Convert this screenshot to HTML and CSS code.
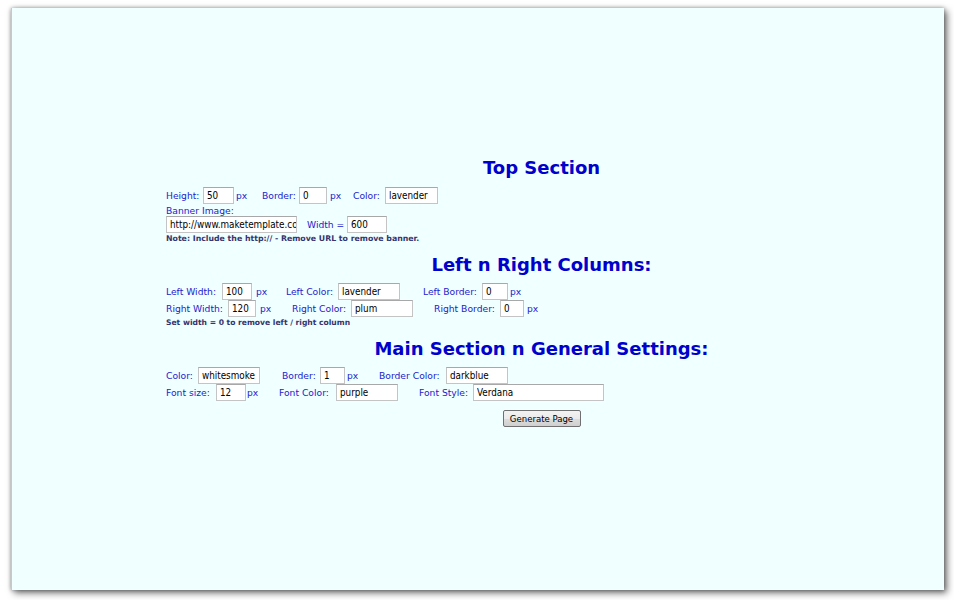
FILE: index.html
```html
<!DOCTYPE html>
<html>
<head>
<meta charset="utf-8">
<title>Make Template</title>
<link rel="stylesheet" href="styles.css">
</head>
<body>
<div class="window">
  <form class="form">
    <h2 class="sec-title first">Top Section</h2>
    <div class="row">
      <span class="lbl w37">Height:</span><input class="in w31" value="50"><span class="unit w28 p2">px</span>
      <span class="lbl w37">Border:</span><input class="in w28" value="0"><span class="unit w26 p3">px</span>
      <span class="lbl w32">Color:</span><input class="in w53" value="lavender">
    </div>
    <div class="line">Banner Image:</div>
    <div class="row">
      <input class="in w131" value="http://www.maketemplate.com/banner.gif"><span class="lbl w50 p10">Width =</span><input class="in w40" value="600">
    </div>
    <div class="note n1">Note: Include the http:// - Remove URL to remove banner.</div>

    <h2 class="sec-title">Left n Right Columns:</h2>
    <div class="row">
      <span class="lbl w56">Left Width:</span><input class="in w30" value="100"><span class="unit w34 p4">px</span>
      <span class="lbl w52">Left Color:</span><input class="in w62" value="lavender">
      <span class="lbl w59 ml23">Left Border:</span><input class="in w26" value="0"><span class="unit p2">px</span>
    </div>
    <div class="row">
      <span class="lbl w62">Right Width:</span><input class="in w28" value="120"><span class="unit w36 p4">px</span>
      <span class="lbl w59">Right Color:</span><input class="in w62" value="plum">
      <span class="lbl w66 ml21">Right Border:</span><input class="in w24" value="0"><span class="unit p3">px</span>
    </div>
    <div class="note n2">Set width = 0 to remove left / right column</div>

    <h2 class="sec-title">Main Section n General Settings:</h2>
    <div class="row">
      <span class="lbl w32">Color:</span><input class="in w62" value="whitesmoke">
      <span class="lbl w38 ml22">Border:</span><input class="in w25" value="1"><span class="unit w34 p2">px</span>
      <span class="lbl w67">Border Color:</span><input class="in w62" value="darkblue">
    </div>
    <div class="row">
      <span class="lbl w50">Font size:</span><input class="in w30" value="12"><span class="unit w33 p1">px</span>
      <span class="lbl w57">Font Color:</span><input class="in w62" value="purple">
      <span class="lbl w54 ml21">Font Style:</span><input class="in w131" value="Verdana">
    </div>
    <div class="btn-row">
      <button type="button" class="btn">Generate Page</button>
    </div>
  </form>
</div>
</body>
</html>
```
FILE: styles.css
```css
html, body {
  margin: 0;
  padding: 0;
  background: #ffffff;
}
body {
  width: 954px;
  height: 600px;
  overflow: hidden;
}
.window {
  margin: 8px 0 0 11px;
  width: 933px;
  height: 582px;
  background: #f0ffff;
  box-shadow: 0 0 4px rgba(0,0,0,0.35), 3px 3px 7px rgba(0,0,0,0.55);
  border-left: 1px solid #c8c8c8;
  box-sizing: border-box;
  overflow: hidden;
}
.form {
  margin: 0 0 0 154px;
  padding-top: 149px;
  width: 751px;
  font-family: "DejaVu Sans", Verdana, sans-serif;
  font-size: 9.2px;
  color: #2222cc;
}
.sec-title {
  margin: 10px 0 0 0;
  font-size: 18px;
  line-height: 22px;
  font-weight: bold;
  color: #0000cc;
  text-align: center;
}
.sec-title.first {
  margin-top: 0;
}
.sec-title + .row {
  margin-top: 7px;
}
.form > .sec-title.first + .row {
  margin-top: 8px;
}
.row {
  display: flex;
  align-items: center;
  height: 17px;
}
.line {
  height: 12px;
  line-height: 13px;
}
.note {
  margin-top: 1px;
  line-height: 10px;
  font-weight: bold;
  color: #34346e;
}
.note.n1 {
  font-size: 7.8px;
}
.note.n2 {
  font-size: 7.6px;
}
.lbl, .unit {
  display: inline-block;
  white-space: nowrap;
  box-sizing: border-box;
  line-height: 17px;
}
.in {
  box-sizing: border-box;
  height: 17px;
  margin: 0;
  padding: 0 0 0 3px;
  border: 1px solid #c4c4c4;
  border-top-color: #a8a8a8;
  background: #ffffff;
  font-family: "DejaVu Sans Condensed", "DejaVu Sans", sans-serif;
  font-stretch: condensed;
  font-size: 9.8px;
  color: #000000;
  outline: none;
}
.btn-row {
  margin-top: 9px;
  display: flex;
  justify-content: center;
}
.btn {
  box-sizing: border-box;
  width: 78px;
  height: 17px;
  padding: 0;
  margin: 0;
  border: 1px solid #707070;
  border-radius: 2px;
  background: linear-gradient(#f2f2f2, #ebebeb 50%, #dddddd 51%, #cfcfcf);
  font-family: "DejaVu Sans Condensed", "DejaVu Sans", sans-serif;
  font-stretch: condensed;
  font-size: 9.5px;
  color: #000000;
}
.w24 { width: 24px; }
.w25 { width: 25px; }
.w26 { width: 26px; }
.w28 { width: 28px; }
.w30 { width: 30px; }
.w31 { width: 31px; }
.w32 { width: 32px; }
.w33 { width: 33px; }
.w34 { width: 34px; }
.w36 { width: 36px; }
.w37 { width: 37px; }
.w38 { width: 38px; }
.w40 { width: 40px; }
.w50 { width: 50px; }
.w52 { width: 52px; }
.w53 { width: 53px; }
.w54 { width: 54px; }
.w56 { width: 56px; }
.w57 { width: 57px; }
.w59 { width: 59px; }
.w62 { width: 62px; }
.w66 { width: 66px; }
.w67 { width: 67px; }
.w131 { width: 131px; }
.p1 { padding-left: 1px; }
.p2 { padding-left: 2px; }
.p3 { padding-left: 3px; }
.p4 { padding-left: 4px; }
.p10 { padding-left: 10px; }
.ml21 { margin-left: 21px; }
.ml22 { margin-left: 22px; }
.ml23 { margin-left: 23px; }
```
